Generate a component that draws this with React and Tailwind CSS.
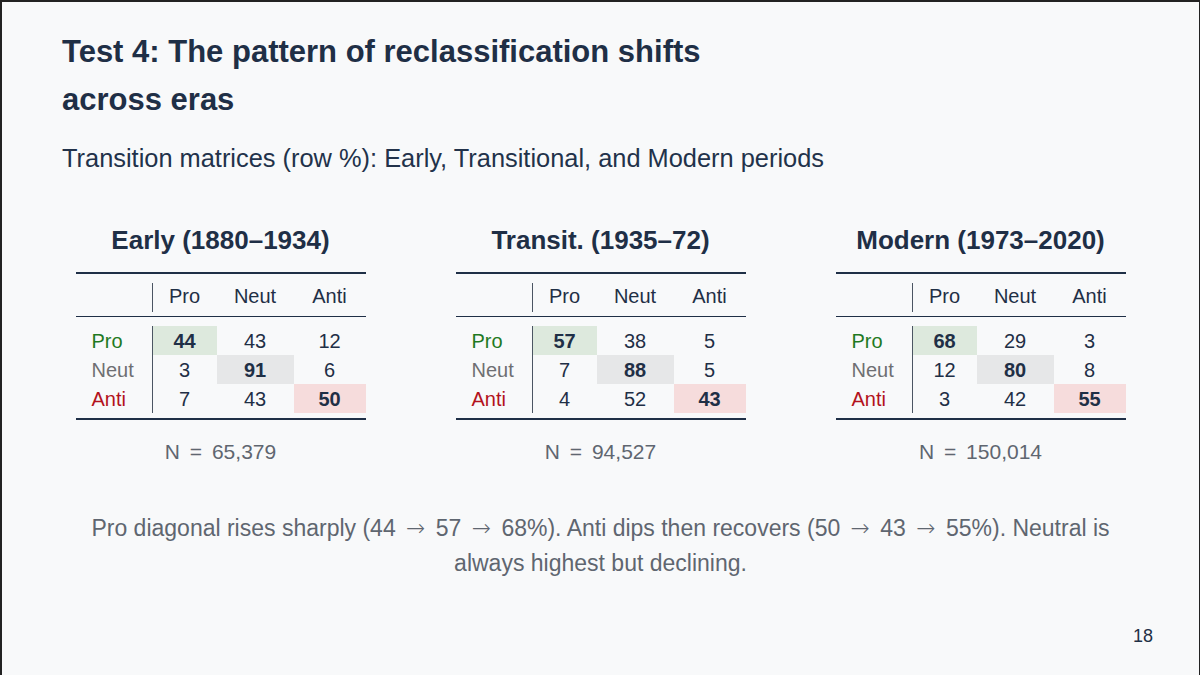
import React from 'react';

const tables = [
  {
    id: 'early',
    title: 'Early (1880–1934)',
    n: '65,379',
    rows: [
      [44, 43, 12],
      [3, 91, 6],
      [7, 43, 50],
    ],
  },
  {
    id: 'transit',
    title: 'Transit. (1935–72)',
    n: '94,527',
    rows: [
      [57, 38, 5],
      [7, 88, 5],
      [4, 52, 43],
    ],
  },
  {
    id: 'modern',
    title: 'Modern (1973–2020)',
    n: '150,014',
    rows: [
      [68, 29, 3],
      [12, 80, 8],
      [3, 42, 55],
    ],
  },
];

const rowLabels = [
  { label: 'Pro', cls: 'text-[#1f7a1f]' },
  { label: 'Neut', cls: 'text-[#6e6f72]' },
  { label: 'Anti', cls: 'text-[#b3121c]' },
];

// diagonal shading per column
const diagBg = ['bg-[#dde9dd]', 'bg-[#e6e7e8]', 'bg-[#f6dcdc]'];
const colWidths = ['w-[64px]', 'w-[77px]', 'w-[72px]'];

function Arrow() {
  return <span className="font-['DejaVu_Sans'] font-light mx-[4px]">→</span>;
}

function Matrix({ table }) {
  return (
    <div className="w-[290px] flex flex-col items-center">
      <h2 className="text-[26px] leading-[30px] font-bold text-[#1f2f46]">{table.title}</h2>

      <div className="w-full mt-[17px] border-t-2 border-b-2 border-[#1f2f46] text-[20px] text-[#1f2f46]">
        {/* header */}
        <div className="flex h-[43px] border-b border-[#1f2f46]">
          <div className="w-[77px] h-[29px] mt-[9px] border-r border-[#4b5563]" />
          {['Pro', 'Neut', 'Anti'].map((h, i) => (
            <div key={h} className={`${colWidths[i]} flex items-center justify-center pt-[2px]`}>
              {h}
            </div>
          ))}
        </div>

        {/* body */}
        <div className="pt-[9px] pb-[5px]">
          {table.rows.map((row, r) => (
            <div key={r} className="flex h-[29px]">
              <div className={`w-[77px] border-r border-[#4b5563] pl-[16px] flex items-center ${rowLabels[r].cls}`}>
                {rowLabels[r].label}
              </div>
              {row.map((v, c) => (
                <div
                  key={c}
                  className={`${colWidths[c]} flex items-center justify-center ${
                    r === c ? `${diagBg[c]} font-bold` : ''
                  }`}
                >
                  {v}
                </div>
              ))}
            </div>
          ))}
        </div>
      </div>

      <p className="mt-[18px] text-[21px] leading-[28px] text-[#5f6670]">
        N <span className="mx-[4px]">=</span> {table.n}
      </p>
    </div>
  );
}

export default function App() {
  return (
    <div
      className="w-[1200px] h-[675px] bg-[#f8f9fa] border-t-2 border-l-2 border-r border-[#222222] flex flex-col overflow-hidden"
      style={{ fontFamily: '"Liberation Sans", Arial, sans-serif' }}
    >
      <div className="pl-[60px] pt-[26px]">
        <h1 className="text-[31px] leading-[48px] font-bold text-[#1f2f46]">
          Test 4: The pattern of reclassification shifts
          <br />
          across eras
        </h1>
        <p className="mt-[18px] text-[25.4px] leading-[32px] text-[#22324a]">
          Transition matrices (row %): Early, Transitional, and Modern periods
        </p>
      </div>

      <div className="mt-[51px] flex justify-center gap-[90px]">
        {tables.map((t) => (
          <Matrix key={t.id} table={t} />
        ))}
      </div>

      <p className="mt-[45px] text-center text-[23px] leading-[35px] text-[#5f6670] whitespace-nowrap">
        Pro diagonal rises sharply (44 <Arrow /> 57 <Arrow /> 68%). Anti dips then recovers (50 <Arrow /> 43{' '}
        <Arrow /> 55%). Neutral is
        <br />
        always highest but declining.
      </p>

      <div className="mt-auto flex justify-end pr-[46px] pb-[27px]">
        <span className="text-[18px] leading-[24px] text-[#1f2f46]">18</span>
      </div>
    </div>
  );
}
